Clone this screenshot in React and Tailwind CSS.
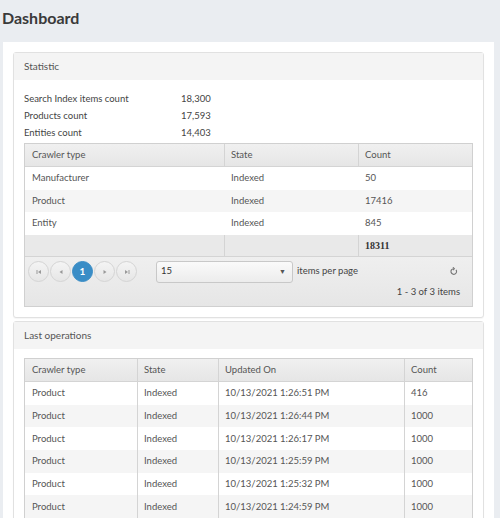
import React from "react";

const Refresh = () => (
  <svg width="9" height="9" viewBox="0 0 16 16" fill="none" stroke="#777" strokeWidth="2">
    <path d="M12.5 5A5 5 0 1 1 8 3" />
    <path d="M7 0.5l2.5 2.5L7 5.5" />
  </svg>
);

function PagerBtn({ children, active }) {
  return (
    <div
      className={
        active
          ? "w-[21px] h-[21px] rounded-full bg-[#3a8dc6] border border-[#3a8dc6] text-white flex items-center justify-center text-[10px] font-bold"
          : "w-[21px] h-[21px] rounded-full bg-gradient-to-b from-[#f4f4f4] to-[#e6e6e6] border border-[#d4d4d4] flex items-center justify-center"
      }
    >
      {children}
    </div>
  );
}

const First = () => (
  <svg width="6" height="6" viewBox="0 0 6 6"><rect x="0.5" y="1" width="1" height="4" fill="#999" /><path d="M5 1v4L2 3z" fill="#999" /></svg>
);
const Prev = () => (
  <svg width="6" height="6" viewBox="0 0 6 6"><path d="M4.5 1v4L1.5 3z" fill="#999" /></svg>
);
const Next = () => (
  <svg width="6" height="6" viewBox="0 0 6 6"><path d="M1.5 1v4L4.5 3z" fill="#999" /></svg>
);
const Last = () => (
  <svg width="6" height="6" viewBox="0 0 6 6"><path d="M1 1v4L4 3z" fill="#999" /><rect x="4.5" y="1" width="1" height="4" fill="#999" /></svg>
);

function Panel({ title, children }) {
  return (
    <div className="border border-[#e1e1e1] rounded-[3px] bg-white shadow-[0_1px_1px_rgba(0,0,0,0.04)]">
      <div className="h-[27px] bg-[#f4f4f4] px-[10px] flex items-center text-[10px] text-[#555]">{title}</div>
      {children}
    </div>
  );
}

const stats = [
  ["Search Index items count", "18,300"],
  ["Products count", "17,593"],
  ["Entities count", "14,403"],
];

const crawl = [
  ["Manufacturer", "Indexed", "50"],
  ["Product", "Indexed", "17416"],
  ["Entity", "Indexed", "845"],
];

const ops = [
  ["10/13/2021 1:26:51 PM", "416"],
  ["10/13/2021 1:26:44 PM", "1000"],
  ["10/13/2021 1:26:17 PM", "1000"],
  ["10/13/2021 1:25:59 PM", "1000"],
  ["10/13/2021 1:25:32 PM", "1000"],
  ["10/13/2021 1:24:59 PM", "1000"],
];

export default function App() {
  return (
    <div className="min-h-[518px] bg-[#eaedf1] font-['Lato',sans-serif] text-[#555]">
      <div className="h-[42px] pl-[2px] pt-[6px] text-[16px] font-bold text-[#3a3a3a]">Dashboard</div>
      <div className="ml-[3px] w-[491px] bg-white p-[10px] flex flex-col gap-[3px]">
        <Panel title="Statistic">
          <div className="p-[10px] pt-[11px]">
            {stats.map(([k, v]) => (
              <div key={k} className="flex h-[16.7px] items-center text-[9.5px] text-[#444]">
                <div className="w-[157px]">{k}</div>
                <div>{v}</div>
              </div>
            ))}
            <div className="mt-[2px] border border-[#d0d0d0] text-[9.5px]">
              <div className="grid grid-cols-[200px_134px_1fr] h-[23px] bg-gradient-to-b from-[#f0f0f0] to-[#e6e6e6] border-b border-[#d4d4d4]">
                <div className="px-[7px] flex items-center border-r border-[#d4d4d4]">Crawler type</div>
                <div className="px-[6px] flex items-center border-r border-[#d4d4d4]">State</div>
                <div className="px-[6px] flex items-center">Count</div>
              </div>
              {crawl.map((r, i) => (
                <div key={i} className={"grid grid-cols-[200px_134px_1fr] h-[22.5px] " + (i % 2 ? "bg-[#f5f5f5]" : "bg-white")}>
                  <div className="px-[7px] flex items-center">{r[0]}</div>
                  <div className="px-[6px] flex items-center">{r[1]}</div>
                  <div className="px-[6px] flex items-center">{r[2]}</div>
                </div>
              ))}
              <div className="grid grid-cols-[200px_134px_1fr] h-[22.5px] bg-[#e9e9e9] border-b border-[#d4d4d4]">
                <div className="border-r border-[#d4d4d4]"></div>
                <div className="border-r border-[#d4d4d4]"></div>
                <div className="px-[6px] flex items-center font-bold font-['Liberation_Serif',serif] text-[10px] text-[#333]">18311</div>
              </div>
              <div className="h-[49px] bg-gradient-to-b from-[#efefef] to-[#e6e6e6] px-[3px] pt-[4px]">
                <div className="flex items-center h-[21px]">
                  <div className="flex gap-[1px]">
                    <PagerBtn><First /></PagerBtn>
                    <PagerBtn><Prev /></PagerBtn>
                    <PagerBtn active>1</PagerBtn>
                    <PagerBtn><Next /></PagerBtn>
                    <PagerBtn><Last /></PagerBtn>
                  </div>
                  <div className="ml-[19px] w-[137px] h-[22px] border border-[#c8c8c8] rounded-[3px] bg-gradient-to-b from-[#fafafa] to-[#ececec] flex items-center justify-between px-[4px] text-[#333]">
                    <span>15</span>
                    <span className="text-[7px] text-[#555] pr-[2px]">▼</span>
                  </div>
                  <div className="ml-[4px] text-[#444]">items per page</div>
                  <div className="ml-auto mr-[11px] flex items-center"><Refresh /></div>
                </div>
                <div className="flex justify-end mt-[3px] mr-[9px] text-[#444]">1 - 3 of 3 items</div>
              </div>
            </div>
          </div>
        </Panel>
        <Panel title="Last operations">
          <div className="p-[10px] pt-[9px]">
            <div className="border border-[#d0d0d0] text-[9.5px]">
              <div className="grid grid-cols-[113px_81px_186px_1fr] h-[23px] bg-gradient-to-b from-[#f0f0f0] to-[#e6e6e6] border-b border-[#d4d4d4]">
                <div className="px-[7px] flex items-center border-r border-[#d4d4d4]">Crawler type</div>
                <div className="px-[6px] flex items-center border-r border-[#d4d4d4]">State</div>
                <div className="px-[6px] flex items-center border-r border-[#d4d4d4]">Updated On</div>
                <div className="px-[6px] flex items-center">Count</div>
              </div>
              {ops.map((r, i) => (
                <div key={i} className={"grid grid-cols-[113px_81px_186px_1fr] h-[22.67px] " + (i % 2 ? "bg-[#f5f5f5]" : "bg-white")}>
                  <div className="px-[7px] flex items-center border-r border-[#d4d4d4]">Product</div>
                  <div className="px-[6px] flex items-center border-r border-[#d4d4d4]">Indexed</div>
                  <div className="px-[6px] flex items-center border-r border-[#d4d4d4]">{r[0]}</div>
                  <div className="px-[6px] flex items-center">{r[1]}</div>
                </div>
              ))}
            </div>
          </div>
        </Panel>
      </div>
    </div>
  );
}
